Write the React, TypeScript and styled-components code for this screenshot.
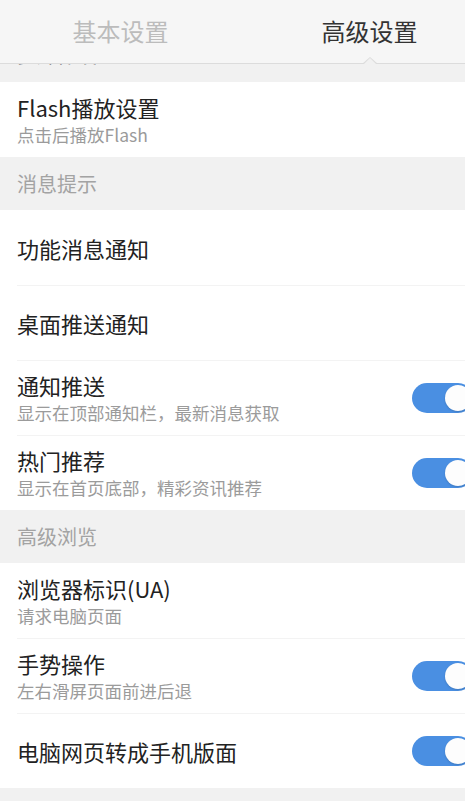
import styled, { createGlobalStyle } from 'styled-components'

const GlobalStyle = createGlobalStyle`
    html, body {
        margin: 0;
        padding: 0;
        background: #f1f1f1;
        overflow: hidden;
    }
    body {
        font-family: "Noto Sans CJK SC", "Noto Sans", sans-serif;
    }
`

type Item = {
    title: string
    sub?: string
    toggle?: boolean
}

type Section = {
    name: string
    clipped?: boolean
    items: Item[]
}

const sections: Section[] = [
    {
        name: "多媒体设置",
        clipped: true,
        items: [{ title: "Flash播放设置", sub: "点击后播放Flash" }]
    },
    {
        name: "消息提示",
        items: [
            { title: "功能消息通知" },
            { title: "桌面推送通知" },
            { title: "通知推送", sub: "显示在顶部通知栏，最新消息获取", toggle: true },
            { title: "热门推荐", sub: "显示在首页底部，精彩资讯推荐", toggle: true }
        ]
    },
    {
        name: "高级浏览",
        items: [
            { title: "浏览器标识(UA)", sub: "请求电脑页面" },
            { title: "手势操作", sub: "左右滑屏页面前进后退", toggle: true },
            { title: "电脑网页转成手机版面", toggle: true }
        ]
    }
]

export default function App() {
    return (
        <Frame>
            <GlobalStyle />
            <Page>
                <Tabs>
                    <Tab>基本设置</Tab>
                    <Tab $active>高级设置</Tab>
                </Tabs>
                {sections.map((section) => (
                    <div key={section.name}>
                        <SectionHeader $clipped={section.clipped}>
                            <span>{section.name}</span>
                        </SectionHeader>
                        <Group>
                            {section.items.map((item) => (
                                <Row key={item.title}>
                                    <Texts>
                                        <Title>{item.title}</Title>
                                        {item.sub && <Sub>{item.sub}</Sub>}
                                    </Texts>
                                    {item.toggle && (
                                        <Switch>
                                            <Knob />
                                        </Switch>
                                    )}
                                </Row>
                            ))}
                        </Group>
                    </div>
                ))}
            </Page>
        </Frame>
    )
}

const Frame = styled.div`
    width: 465px;
    height: 801px;
    overflow: hidden;
    background: #f1f1f1;
`

const Page = styled.div`
    width: 498px;
    margin-left: -4px;
`

const Tabs = styled.div`
    position: relative;
    display: grid;
    grid-template-columns: 1fr 1fr;
    height: 64px;
    background: #f6f6f6;
    border-bottom: 1px solid #dcdcdc;
    box-sizing: border-box;
`

const Tab = styled.div<{ $active?: boolean }>`
    position: relative;
    display: flex;
    align-items: center;
    justify-content: center;
    padding-bottom: 2px;
    font-size: 24px;
    color: ${(p) => (p.$active ? '#333' : '#bcbcbc')};

    &::after {
        content: '';
        display: ${(p) => (p.$active ? 'block' : 'none')};
        position: absolute;
        bottom: -1px;
        left: 50%;
        margin-left: -8px;
        width: 0;
        height: 0;
        border-left: 8px solid transparent;
        border-right: 8px solid transparent;
        border-bottom: 7px solid #dcdcdc;
    }

    &::before {
        content: '';
        display: ${(p) => (p.$active ? 'block' : 'none')};
        position: absolute;
        bottom: -2px;
        left: 50%;
        margin-left: -7px;
        width: 0;
        height: 0;
        border-left: 7px solid transparent;
        border-right: 7px solid transparent;
        border-bottom: 7px solid #f1f1f1;
        z-index: 1;
    }
`

const SectionHeader = styled.div<{ $clipped?: boolean }>`
    height: ${(p) => (p.$clipped ? '18px' : '53px')};
    overflow: hidden;
    display: flex;
    align-items: ${(p) => (p.$clipped ? 'flex-start' : 'center')};
    padding: 0 21px;
    font-size: 20px;
    line-height: 24px;
    color: #a3a3a3;
    background: #f1f1f1;

    span {
        margin-top: ${(p) => (p.$clipped ? '-21px' : '0')};
        color: ${(p) => (p.$clipped ? '#777' : 'inherit')};
    }
`

const Group = styled.div`
    background: #fff;
`

const Row = styled.div`
    display: flex;
    align-items: center;
    justify-content: space-between;
    height: 75px;
    padding: 0 21px;
    box-sizing: border-box;
    position: relative;

    & + &::before {
        content: '';
        position: absolute;
        top: 0;
        left: 21px;
        right: 0;
        border-top: 1px solid #f3f3f3;
    }
`

const Texts = styled.div`
    display: flex;
    flex-direction: column;
`

const Title = styled.div`
    font-size: 22px;
    line-height: 30px;
    color: #222;
`

const Sub = styled.div`
    font-size: 17.5px;
    line-height: 26px;
    color: #9b9b9b;
`

const Switch = styled.div`
    position: relative;
    width: 61px;
    height: 30px;
    border-radius: 15px;
    background: #4a8fe2;
    flex-shrink: 0;
`

const Knob = styled.div`
    position: absolute;
    top: 2px;
    right: 2px;
    width: 26px;
    height: 26px;
    border-radius: 50%;
    background: #fdfdfd;
    box-shadow: 0 1px 2px rgba(0, 0, 0, 0.15);
`
